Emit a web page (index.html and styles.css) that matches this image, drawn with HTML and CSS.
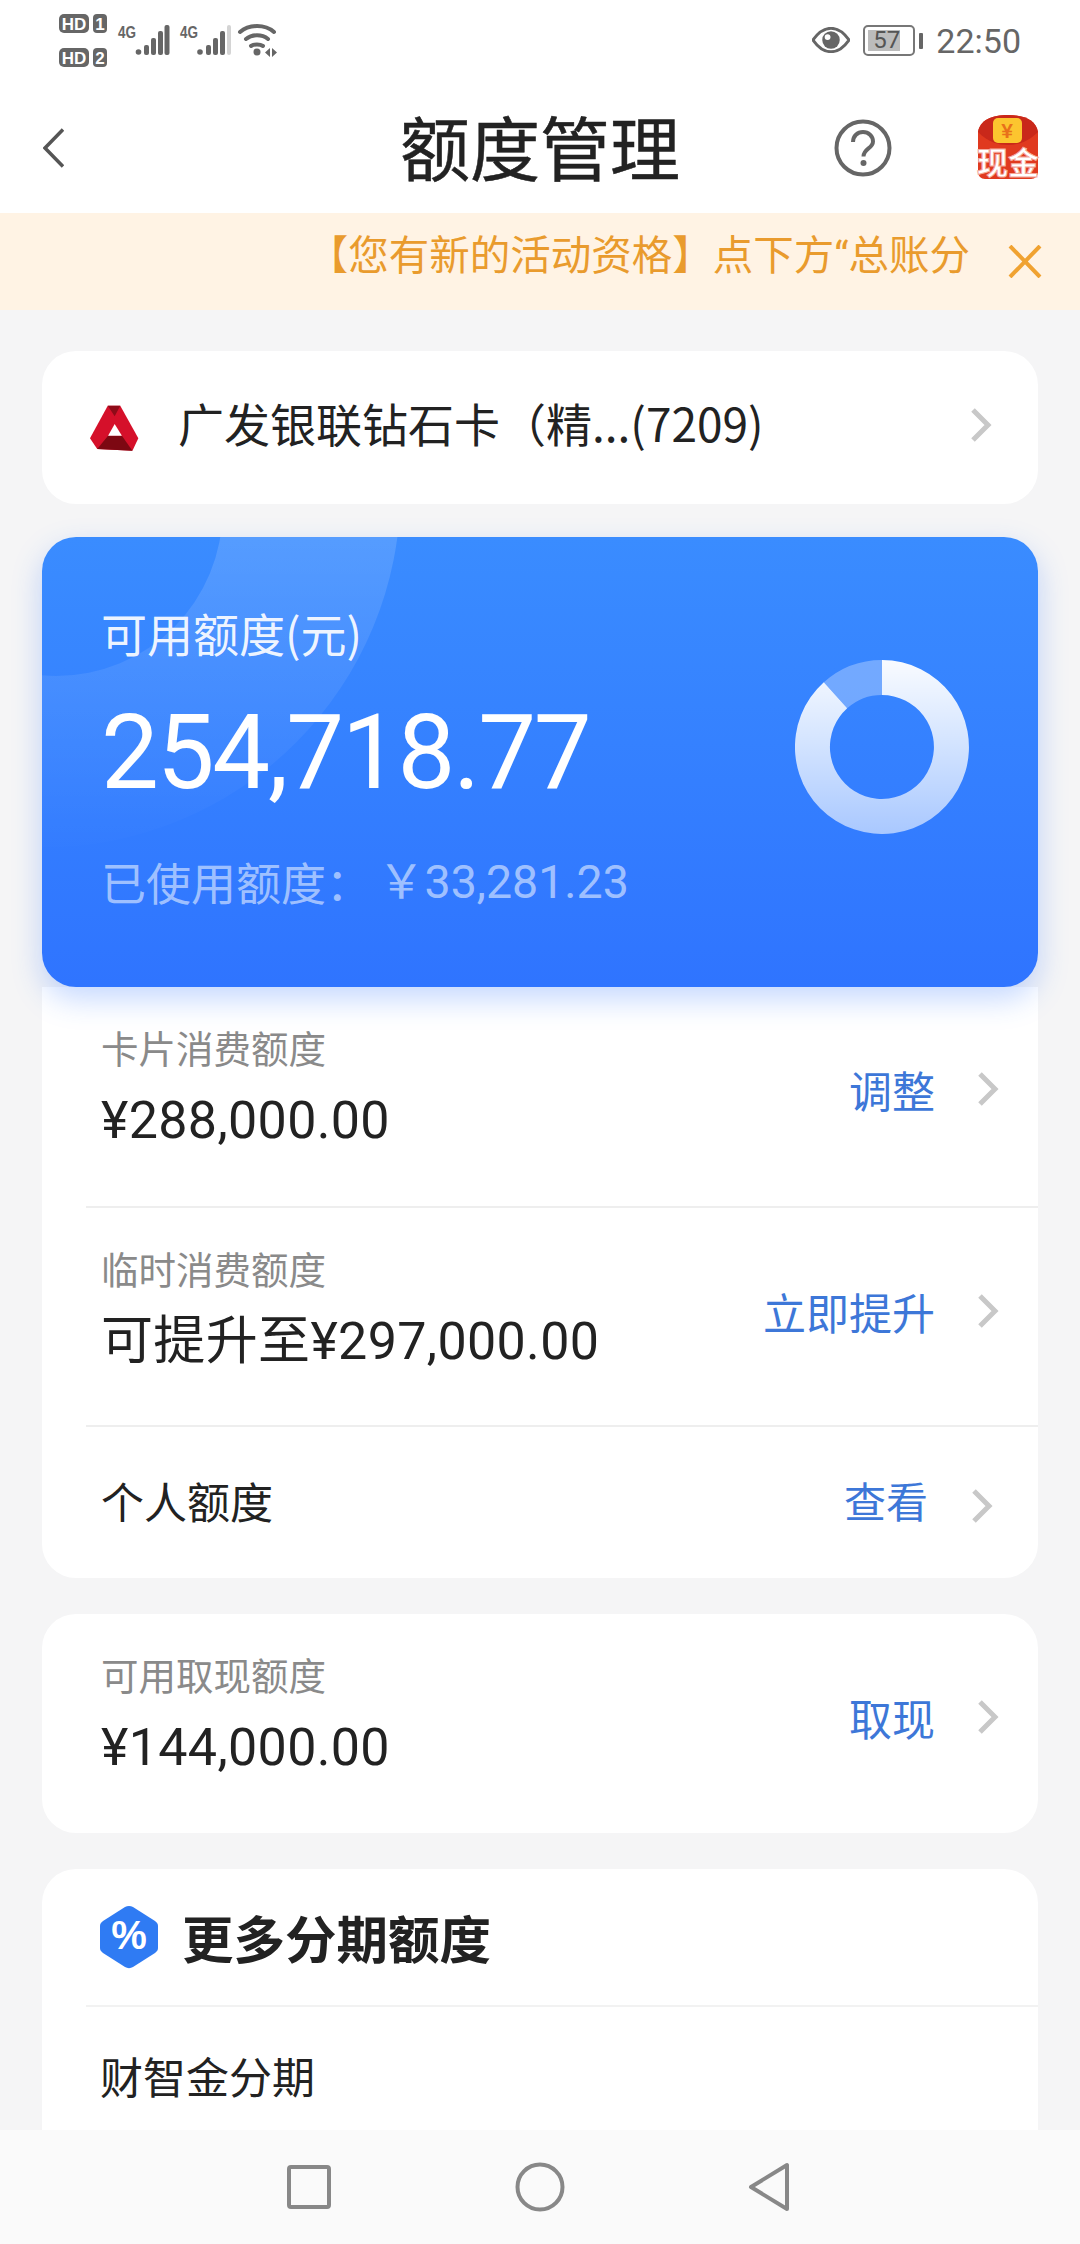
FILE: index.html
```html
<!DOCTYPE html>
<html lang="zh-CN">
<head>
<meta charset="utf-8">
<title>额度管理</title>
<link rel="stylesheet" href="styles.css">
</head>
<body>
<div class="page">
  <div class="status">
    <svg class="status-left" width="220" height="70" viewBox="0 0 220 70">
      <g fill="#666">
        <rect x="0" y="0" width="30" height="19" rx="5"/><rect x="34" y="0" width="14" height="19" rx="4"/>
        <rect x="0" y="34" width="30" height="19" rx="5"/><rect x="34" y="34" width="14" height="19" rx="4"/>
      </g>
      <g class="hd-text" fill="#fff">
        <text x="15" y="16" text-anchor="middle">HD</text><text x="41" y="16" text-anchor="middle">1</text>
        <text x="15" y="50" text-anchor="middle">HD</text><text x="41" y="50" text-anchor="middle">2</text>
      </g>
      <g class="net-text" fill="#666"><text x="59" y="24" textLength="18" lengthAdjust="spacingAndGlyphs">4G</text><text x="121" y="24" textLength="18" lengthAdjust="spacingAndGlyphs">4G</text></g>
      <g fill="#666">
        <circle cx="79.500" cy="38" r="2.800"/><rect x="85" y="31" width="5" height="10" rx="2"/><rect x="92" y="24" width="5" height="17" rx="2"/><rect x="99" y="17" width="5" height="24" rx="2"/><rect x="105.500" y="11" width="5" height="30" rx="2"/>
        <circle cx="141" cy="38" r="2.800"/><rect x="147" y="31" width="5" height="10" rx="2"/><rect x="154" y="24" width="5" height="17" rx="2"/><rect x="161" y="17" width="5" height="24" rx="2"/>
        <rect x="168" y="11" width="4" height="30" rx="2" fill="#d4d4d4"/>
        <circle cx="198" cy="38" r="3.500"/>
        <path d="M206 38.500l5-4.500v9zM213 34l5 4.500-5 4.500z"/>
      </g>
      <g fill="none" stroke="#666" stroke-width="4" stroke-linecap="round">
        <path d="M181 18c9-8 25-8 34 0"/><path d="M187 25c6-5 16-5 22 0"/><path d="M192 32c3-2 9-2 12 0"/>
      </g>
    </svg>
    <div class="status-right">
      <svg width="38" height="26" viewBox="0 0 39 26">
        <path d="M1 13C8 3 14 1 19.500 1S31 3 38 13C31 23 25 25 19.500 25S8 23 1 13z" fill="none" stroke="#666" stroke-width="3"/>
        <circle cx="19.500" cy="13" r="9" fill="#666"/><circle cx="16" cy="10" r="3" fill="#fff"/>
      </svg>
      <div class="battery">
        <div class="battery-body"><span class="battery-fill"></span><span class="battery-num">57</span></div>
        <span class="battery-tip"></span>
      </div>
      <span class="clock">22:50</span>
    </div>
  </div>

  <header class="nav">
    <svg class="back" width="21" height="40" viewBox="0 0 21 40"><path d="M20 1.500L2 20l18 18.500" fill="none" stroke="#555" stroke-width="3.500"/></svg>
    <h1 class="title">额度管理</h1>
    <svg class="help" width="58" height="58" viewBox="0 0 58 58">
      <circle cx="29" cy="29" r="26.500" fill="none" stroke="#666" stroke-width="4"/>
      <path d="M19 23c0-6 4.500-10 10-10s10 4 10 9.500c0 7-9.500 7-9.500 15" fill="none" stroke="#666" stroke-width="4"/>
      <circle cx="29.500" cy="44" r="3" fill="#666"/>
    </svg>
    <svg class="packet" width="64" height="72" viewBox="0 0 64 72">
      <path d="M2 18C4 6 16 1 32 1s28 5 30 17v40c0 4-3 7-7 7H9c-4 0-7-3-7-7z" fill="#e0391f"/>
      <path d="M2 18C4 6 16 1 32 1s28 5 30 17C52 28 42 31 32 31S12 28 2 18z" fill="#c9281a"/>
      <rect x="17" y="4" width="29" height="25" rx="5" fill="#fcc52f"/>
      <text class="packet-yen" x="31" y="24" text-anchor="middle">¥</text>
      <text class="packet-text" x="32" y="60" text-anchor="middle">现金</text>
    </svg>
  </header>

  <div class="notice">
    <span class="notice-text">【您有新的活动资格】点下方“总账分</span>
    <svg width="34" height="33" viewBox="0 0 34 33"><path d="M2 1l30 31M32 1L2 32" fill="none" stroke="#f0a231" stroke-width="4"/></svg>
  </div>

  <main class="content">
    <section class="card card-bank">
      <svg class="bank-logo" width="50" height="46" viewBox="90 68 152 138" preserveAspectRatio="none">
        <path d="M147 70h38l55 98-18 37-107-5-22-32z" fill="#d5102a"/>
        <path d="M147 70h38l-17 32z" fill="#8e0b18"/>
        <path d="M115 200l33-40h42l32 45z" fill="#7d0812"/>
        <path d="M168 125l-20 35h42z" fill="#fff"/>
      </svg>
      <span class="bank-name">广发银联钻石卡（精...(7209)</span>
      <svg class="chev" width="23" height="36" viewBox="0 0 23 36"><path d="M3 3l15 15L3 33" fill="none" stroke="#c8c8c8" stroke-width="5"/></svg>
    </section>

    <section class="hero">
      <svg class="hero-deco" width="996" height="450" viewBox="0 0 996 450">
        <defs>
          <linearGradient id="band" x1="0" y1="0" x2="0" y2="310" gradientUnits="userSpaceOnUse">
            <stop offset="0" stop-color="#fff" stop-opacity=".14"/>
            <stop offset="1" stop-color="#fff" stop-opacity=".005"/>
          </linearGradient>
        </defs>
        <path fill="url(#band)" fill-rule="evenodd" d="M-356.500-47a357.500 357.500 0 1 0 715 0a357.500 357.500 0 1 0 -715 0zM-151.500-27a166 166 0 1 0 332 0a166 166 0 1 0 -332 0z"/>
      </svg>
      <div class="hero-text">
        <div class="hero-label">可用额度(元)</div>
        <div class="hero-amount">254,718.77</div>
        <div class="hero-used"><span>已使用额度：</span><span class="hero-used-num">￥33,281.23</span></div>
      </div>
      <svg class="donut" width="174" height="174" viewBox="0 0 174 174">
        <defs>
          <linearGradient id="ring" x1="0" y1="0" x2="0" y2="1">
            <stop offset="0" stop-color="#fff" stop-opacity=".97"/>
            <stop offset="1" stop-color="#fff" stop-opacity=".58"/>
          </linearGradient>
        </defs>
        <path d="M87 0A87 87 0 1 1 28.800 22.300L52.200 48.300A52 52 0 1 0 87 35z" fill="url(#ring)"/>
        <path d="M87 0V35A52 52 0 0 0 52.200 48.300L28.800 22.300A87 87 0 0 1 87 0z" fill="#fff" fill-opacity=".3"/>
      </svg>
    </section>

    <section class="card card-list">
      <div class="row row-first">
        <div class="row-text"><div class="row-label">卡片消费额度</div><div class="row-value">¥288,000.00</div></div>
        <span class="row-link">调整</span>
        <svg class="chev" width="23" height="36" viewBox="0 0 23 36"><path d="M3 3l15 15L3 33" fill="none" stroke="#c8c8c8" stroke-width="5"/></svg>
      </div>
      <div class="row row-line">
        <div class="row-text"><div class="row-label">临时消费额度</div><div class="row-value">可提升至¥297,000.00</div></div>
        <span class="row-link">立即提升</span>
        <svg class="chev" width="23" height="36" viewBox="0 0 23 36"><path d="M3 3l15 15L3 33" fill="none" stroke="#c8c8c8" stroke-width="5"/></svg>
      </div>
      <div class="row row-line row-last">
        <div class="row-text"><div class="row-plain">个人额度</div></div>
        <span class="row-link">查看</span>
        <svg class="chev" width="23" height="36" viewBox="0 0 23 36"><path d="M3 3l15 15L3 33" fill="none" stroke="#c8c8c8" stroke-width="5"/></svg>
      </div>
    </section>

    <section class="card card-cash">
      <div class="row row-cash">
        <div class="row-text"><div class="row-label">可用取现额度</div><div class="row-value">¥144,000.00</div></div>
        <span class="row-link">取现</span>
        <svg class="chev" width="23" height="36" viewBox="0 0 23 36"><path d="M3 3l15 15L3 33" fill="none" stroke="#c8c8c8" stroke-width="5"/></svg>
      </div>
    </section>

    <section class="card card-more">
      <div class="more-head">
        <svg width="58" height="64" viewBox="0 0 58 64">
          <path d="M25 2L3 16c-2 1.500-3 3-3 5v22c0 2 1 3.500 3 5l22 14c2.500 1.500 5.500 1.500 8 0l22-14c2-1.500 3-3 3-5V21c0-2-1-3.500-3-5L33 2c-2.500-1.500-5.500-1.500-8 0z" fill="#2f7bf3"/>
          <text class="more-pct" x="29" y="44" text-anchor="middle">%</text>
        </svg>
        <h2 class="more-title">更多分期额度</h2>
      </div>
      <div class="more-item">财智金分期</div>
    </section>
  </main>

  <footer class="sysbar">
    <svg width="44" height="44" viewBox="0 0 44 44"><rect x="2" y="2" width="40" height="40" rx="2" fill="none" stroke="#888" stroke-width="4"/></svg>
    <svg width="50" height="50" viewBox="0 0 50 50"><circle cx="25" cy="25" r="22.500" fill="none" stroke="#888" stroke-width="4"/></svg>
    <svg width="42" height="50" viewBox="0 0 42 50"><path d="M39 3v44L3 25z" fill="none" stroke="#888" stroke-width="4" stroke-linejoin="round"/></svg>
  </footer>
</div>
</body>
</html>
```

FILE: styles.css
```css
* { box-sizing: border-box; margin: 0; padding: 0; }
html, body { width: 1080px; height: 2244px; overflow: hidden; }
body { font-family: "Noto Sans CJK SC", "Noto Sans", Roboto, sans-serif; background: #f5f5f6; color: #222; }
.page { width: 1080px; height: 2244px; display: flex; flex-direction: column; overflow: hidden; }

.status { height: 85px; background: #fff; display: flex; justify-content: space-between; padding: 14px 59px 0 59px; flex: none; }
.status-left { display: block; }
.hd-text { font: 700 17px "Liberation Sans", sans-serif; }
.net-text { font: 700 17px "Liberation Sans", sans-serif; }
.status-right { display: flex; align-items: flex-start; gap: 13px; padding-top: 12px; margin-top: 1px; }
.battery { display: flex; align-items: center; gap: 4px; margin-top: -2px; }
.battery-body { width: 52px; height: 31px; border: 2.500px solid #777; border-radius: 5px; padding: 3px; display: flex; position: relative; }
.battery-fill { display: block; width: 32px; background: #bcbcbc; }
.battery-num { position: absolute; left: 8px; top: 1px; font: 400 24px/24px Roboto, sans-serif; color: #555; }
.battery-tip { width: 4px; height: 16px; background: #666; border-radius: 1px; }
.clock { font: 400 34px/28px Roboto, sans-serif; color: #666; }

.nav { height: 128px; background: #fff; display: flex; align-items: center; padding: 0 40px 0 43px; flex: none; position: relative; }
.back { margin-top: -2px; }
.title { position: absolute; left: 0; right: 0; top: 19px; text-align: center; font-size: 70px; line-height: 84px; font-weight: 400; color: #222; -webkit-text-stroke: .5px #222; }
.help { margin-left: auto; margin-top: -3px; }
.packet { margin-left: 84px; margin-top: 1px; }
.packet-yen { font: 700 21px "Liberation Sans", sans-serif; fill: #e8701a; }
.packet-text { font: 700 31px "Noto Sans CJK SC", sans-serif; fill: #fff; stroke: #f4a79a; stroke-width: 1px; }

.notice { height: 97px; background: #fff3e4; display: flex; align-items: center; justify-content: flex-end; gap: 38px; padding: 0 38px 0 0; flex: none; }
.notice-text { font-family: Roboto, "Noto Sans CJK SC", sans-serif; font-size: 40.500px; line-height: 56px; color: #e99b2d; margin-top: -11px; }

.content { flex: 1; min-height: 0; overflow: hidden; padding: 41px 42px 0; display: flex; flex-direction: column; }
.card { background: #fff; border-radius: 34px; flex: none; }

.card-bank { height: 153px; display: flex; align-items: center; padding: 0 45px 11px 47px; }
.card-bank .chev { margin-top: 5px; }
.bank-logo { margin-right: 39px; margin-top: 11px; }
.bank-name { flex: 1; font-size: 46px; line-height: 60px; color: #222; }

.hero { position: relative; z-index: 1; height: 450px; margin-top: 33px; border-radius: 34px; flex: none; overflow: hidden; display: flex; justify-content: space-between; padding: 65px 69px 0 59px;
  background: linear-gradient(180deg, #3a8cff 0%, #2f74ff 100%);
  box-shadow: 0 12px 30px rgba(47,116,255,.28);
}
.hero-deco { position: absolute; left: 0; top: 0; }
.hero-text, .donut { position: relative; }
.hero-label { font-size: 46px; line-height: 60px; color: rgba(255,255,255,.93); }
.hero-amount { font: 400 103px/120px Roboto, sans-serif; letter-spacing: -2.200px; color: #fff; margin-top: 31px; }
.hero-used { display: flex; font-size: 45px; line-height: 60px; color: rgba(255,255,255,.55); margin-top: 39px; }
.hero-used-num { font: 400 46.500px/60px Roboto, "Noto Sans CJK SC", sans-serif; margin-left: 7px; }
.donut { margin-top: 58px; }

.card-list { border-radius: 0 0 34px 34px; height: 591px; }
.row { display: flex; align-items: center; padding: 0 38px 18px 15px; margin-left: 44px; }
.row-first { height: 219px; }
.row-line { height: 219px; border-top: 2px solid #eeeeee; padding-bottom: 16px; }
.row-last { height: 153px; padding: 0 44px 6px 15px; }
.row-text { flex: 1; }
.row-label { font-size: 37.500px; line-height: 50px; color: #8a8a8a; }
.row-value { font: 400 52px/64px "Roboto", "Noto Sans CJK SC", sans-serif; letter-spacing: .35px; color: #222; margin-top: 17px; }
.row-plain { font-size: 43px; line-height: 60px; color: #222; }
.row-link { font-size: 43px; line-height: 56px; color: #3d77d8; margin-right: 42px; margin-top: 2px; }
.chev { flex: none; }
.row-first .chev { margin-top: 2px; }
.row-line .row-link { margin-top: 4px; }
.row-line .chev { margin-top: 4px; }
.row-last .chev { margin-top: 12px; }
.row-last .row-link { margin-top: 0; margin-right: 43px; font-size: 42px; }

.card-cash { height: 219px; margin-top: 36px; }
.row-cash { height: 219px; }
.row-cash .row-link { margin-top: 4px; }
.row-cash .chev { margin-top: 4px; }

.card-more { margin-top: 36px; height: 400px; }
.more-head { height: 138px; margin-left: 44px; padding: 0 0 0 14px; display: flex; align-items: center; gap: 24px; border-bottom: 2px solid #f2f2f2; }
.more-pct { font: 700 40px "Liberation Sans", sans-serif; fill: #fff; }
.more-title { font-size: 51.500px; line-height: 70px; font-weight: 700; color: #222; }
.more-item { margin-left: 58px; margin-top: 38px; font-size: 43px; line-height: 60px; color: #222; }

.sysbar { height: 114px; background: #fafafa; flex: none; display: flex; align-items: center; padding: 0 290px 0 287px; justify-content: space-between; }
```
